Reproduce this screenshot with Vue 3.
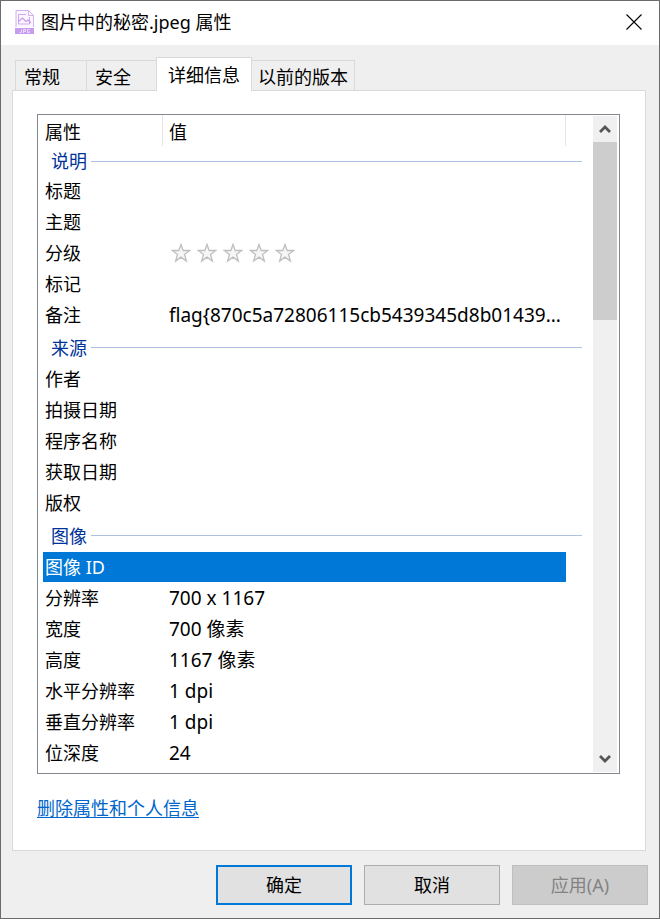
<script setup>
import { ref } from 'vue'

const tabs = ['常规', '安全', '详细信息', '以前的版本']
const activeTab = ref('详细信息')
const selected = ref('图像 ID')

const groups = [
  {
    title: '说明',
    rows: [
      { name: '标题' },
      { name: '主题' },
      { name: '分级', rating: 5 },
      { name: '标记' },
      { name: '备注', value: 'flag{870c5a72806115cb5439345d8b01439...' },
    ],
  },
  {
    title: '来源',
    rows: [
      { name: '作者' },
      { name: '拍摄日期' },
      { name: '程序名称' },
      { name: '获取日期' },
      { name: '版权' },
    ],
  },
  {
    title: '图像',
    rows: [
      { name: '图像 ID' },
      { name: '分辨率', value: '700 x 1167' },
      { name: '宽度', value: '700 像素' },
      { name: '高度', value: '1167 像素' },
      { name: '水平分辨率', value: '1 dpi' },
      { name: '垂直分辨率', value: '1 dpi' },
      { name: '位深度', value: '24' },
    ],
  },
]
</script>

<template>
  <div class="window">
    <header class="titlebar">
      <svg class="file-icon" viewBox="0 0 20 24" aria-hidden="true">
        <path d="M1 17V.5H13.500L18.500 5.500V17" fill="#fbf6ff" stroke="#d3b0f3" />
        <path d="M13.500 .5V5.500H18.500" fill="none" stroke="#d3b0f3" />
        <path d="M14.500 7V14H3.500V4.500H11" fill="none" stroke="#cfa8f1" />
        <path d="M3.500 11.500L7.500 8L11 11.500L13 10L16 13" fill="none" stroke="#c79bee" stroke-width="1.200" />
        <rect x="0" y="18" width="19" height="6" fill="#c79bee" />
        <path d="M6.500 19.500V22.500H4.500M8.500 23V19.500H10.500V21.500H8.500M14.500 19.500H12.500V22.500H14.500V21" fill="none" stroke="#f3e6ff" stroke-width=".8" />
      </svg>
      <h1>图片中的秘密.jpeg 属性</h1>
      <button class="close" type="button" aria-label="关闭">
        <svg viewBox="0 0 16 16"><path d="M.5 .5L15.500 15.500M15.500 .5L.5 15.500" fill="none" stroke="#000" stroke-width="1.100" /></svg>
      </button>
    </header>

    <main>
      <nav class="tabs" role="tablist">
        <button
          v-for="tab in tabs"
          :key="tab"
          type="button"
          role="tab"
          class="tab"
          :class="{ active: tab === activeTab }"
          :aria-selected="tab === activeTab"
          @click="activeTab = tab"
        >{{ tab }}</button>
      </nav>

      <section class="panel">
        <div class="list">
          <table>
            <colgroup>
              <col class="col-name" />
              <col />
              <col class="col-rest" />
            </colgroup>
            <thead>
              <tr>
                <th scope="col">属性</th>
                <th scope="col">值</th>
                <td></td>
              </tr>
            </thead>
            <tbody v-for="group in groups" :key="group.title">
              <tr class="group">
                <th colspan="3" scope="rowgroup"><div class="group-title">{{ group.title }}</div></th>
              </tr>
              <tr
                v-for="row in group.rows"
                :key="row.name"
                class="row"
                :class="{ selected: row.name === selected }"
                @click="selected = row.name"
              >
                <th scope="row">{{ row.name }}</th>
                <td>
                  <div v-if="row.rating" class="stars">
                    <svg v-for="n in row.rating" :key="n" viewBox="0 0 20 20">
                      <path d="M10 1.500L12.200 7.500H18.700L13.500 11.400L15.400 18L10 14.100L4.600 18L6.500 11.400L1.300 7.500H7.800Z" fill="#f6f6f6" stroke="#bfbfbf" stroke-width="1.300" />
                    </svg>
                  </div>
                  <template v-else>{{ row.value }}</template>
                </td>
                <td></td>
              </tr>
            </tbody>
          </table>
          <div class="scrollbar">
            <button type="button" aria-label="向上滚动">
              <svg viewBox="0 0 12 10"><path d="M1 8L6 3L11 8" fill="none" stroke="#555" stroke-width="2.800" /></svg>
            </button>
            <div class="track"><div class="thumb"></div></div>
            <button type="button" aria-label="向下滚动">
              <svg viewBox="0 0 12 10"><path d="M1 2L6 7L11 2" fill="none" stroke="#555" stroke-width="2.800" /></svg>
            </button>
          </div>
        </div>
        <a class="remove" href="#">删除属性和个人信息</a>
      </section>
    </main>

    <footer>
      <button class="default" type="button">确定</button>
      <button type="button">取消</button>
      <button type="button" disabled>应用(A)</button>
    </footer>
  </div>
</template>

<style>
body {
  margin: 0;
  background: #efefef;
}
</style>

<style scoped>
.window {
  box-sizing: border-box;
  min-height: 100vh;
  display: flex;
  flex-direction: column;
  border: 1px solid #6b6b6b;
  background: #efefef;
  color: #000;
  font: 18px/24px "Noto Sans", "Noto Sans CJK SC", sans-serif;
}
button {
  font: inherit;
  color: inherit;
  margin: 0;
  padding: 0;
  border: 0;
  background: none;
}
svg {
  display: block;
}
.titlebar {
  display: flex;
  align-items: center;
  height: 44px;
  padding: 0 17px 2px 14px;
  box-sizing: border-box;
  background: #fff;
}
.file-icon {
  width: 20px;
  height: 24px;
  margin-right: 6px;
}
h1 {
  flex: 1;
  margin: 0;
  font-size: 18px;
  font-weight: 400;
}
.close svg {
  width: 16px;
  height: 16px;
}
main {
  flex: 1;
  display: flex;
  flex-direction: column;
  padding: 12px 13px 0 11px;
}
.tabs {
  display: flex;
  align-items: flex-end;
  padding-left: 3px;
}
.tab {
  height: 30px;
  padding: 2px 26px 0 8px;
  border: 1px solid #d9d9d9;
  border-bottom: 0;
  margin-right: -1px;
}
.tab:last-child {
  padding: 2px 6px 0;
}
.tab.active {
  position: relative;
  height: 34px;
  margin-bottom: -1px;
  margin-left: -1px;
  padding: 0 11px;
  background: #fff;
}
.panel {
  flex: 1;
  padding: 23px 25px 30px 24px;
  border: 1px solid #d9d9d9;
  background: #fff;
}
.list {
  display: flex;
  padding: 0 2px 0 5px;
  border: 1px solid #828790;
}
table {
  flex: 1;
  min-width: 0;
  table-layout: fixed;
  border-spacing: 0;
  margin-bottom: 4px;
}
.col-name {
  width: 120px;
}
.col-rest {
  width: 16px;
}
th,
td {
  box-sizing: border-box;
  padding: 0;
  font-weight: 400;
  text-align: left;
  white-space: nowrap;
}
thead th {
  height: 31px;
  padding: 2px 0 0 2px;
  border-right: 1px solid #e5e5e5;
}
th + th,
.row th + td {
  padding-left: 6px;
}
.row td {
  font-size: 19px;
}
.group th {
  height: 33px;
}
thead + tbody .group th {
  height: 30px;
}
.group-title {
  display: flex;
  align-items: center;
  gap: 4px;
  padding-left: 8px;
  color: #003399;
}
.group-title::after {
  content: "";
  flex: 1;
  height: 1px;
  background: #b0c0e0;
}
.row th,
.row td {
  height: 31px;
  border-bottom: 1px solid transparent;
  background-clip: padding-box;
}
.row th {
  padding-left: 2px;
}
.selected th,
.selected th + td {
  background-color: #0078d7;
  color: #fff;
}
.stars {
  display: flex;
  gap: 6px;
  padding-left: 2px;
}
.stars svg {
  width: 20px;
  height: 20px;
}
.scrollbar {
  display: flex;
  flex-direction: column;
  width: 24px;
  margin: 1px 0 1px 11px;
  background: #f0f0f0;
}
.scrollbar button {
  display: grid;
  place-items: center;
  height: 26px;
}
.scrollbar svg {
  width: 12px;
  height: 10px;
}
.track {
  flex: 1;
}
.thumb {
  height: 29.500%;
  background: #cdcdcd;
}
.remove {
  display: inline-block;
  margin-top: 22px;
  color: #0066cc;
  text-underline-offset: 2px;
}
footer {
  display: flex;
  justify-content: flex-end;
  gap: 12px;
  padding: 14px 11px 13px;
}
footer button {
  width: 136px;
  height: 40px;
  border: 1px solid #adadad;
  background: #e1e1e1;
}
footer .default {
  border: 2px solid #0078d7;
}
footer button:disabled {
  border-color: #bfbfbf;
  background: #cccccc;
  color: #838383;
}
</style>
